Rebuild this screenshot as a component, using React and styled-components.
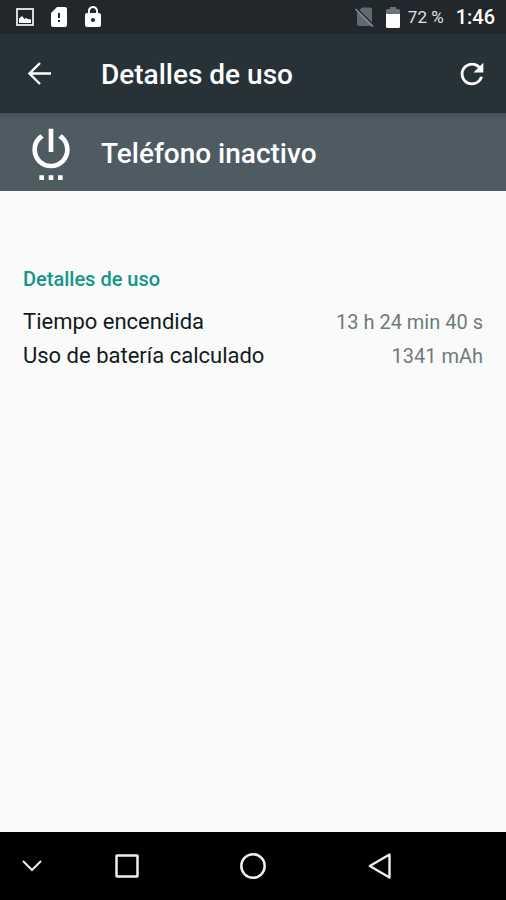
import React from 'react'
import styled, { createGlobalStyle } from 'styled-components'
import { MdLock, MdRefresh, MdSettingsPower } from 'react-icons/md'

const details = [
  { label: 'Tiempo encendida', value: '13 h 24 min 40 s' },
  { label: 'Uso de batería calculado', value: '1341 mAh' },
]

function App() {
  return (
    <>
      <GlobalStyle />
      <Screen>
        <StatusBar>
          <StatusIcons>
            <svg width="24" height="24" viewBox="0 0 24 24">
              <rect x="4" y="4" width="16" height="16" fill="none" stroke="#eceff1" strokeWidth="1.8" />
              <path d="M6 18v-4.500l3-2.500 2.500 3 1.500-1 2 1 3 .5V18z" fill="#fff" />
            </svg>
            <svg width="24" height="24" viewBox="0 0 24 24">
              <path fillRule="evenodd" fill="#fff" d="M18 2h-8L4 8v12a2 2 0 0 0 2 2h12a2 2 0 0 0 2-2V4a2 2 0 0 0-2-2zm-5 15h-2v-2h2v2zm0-4h-2V8h2v5z" />
            </svg>
            <MdLock size={24} />
          </StatusIcons>
          <SimIcon width="24" height="24" viewBox="0 0 24 24">
            <path fill="#606b70" d="M20 4.500a2 2 0 0 0-2-2h-8L5 7.500V19a2 2 0 0 0 2 2h11a2 2 0 0 0 2-2z" />
            <path d="M4.500 3L22 20.500" stroke="#21272b" strokeWidth="1.500" />
            <path d="M3.500 4L21 21.500" stroke="#829095" strokeWidth="1.600" />
          </SimIcon>
          <BatteryIcon width="14" height="21" viewBox="0 0 14 21">
            <path fill="#69757a" d="M0 7V3.500Q0 2 1.500 2H4V0h6v2h2.500Q14 2 14 3.500V7z" />
            <path fill="#fff" d="M0 7h14v12.500q0 1.500-1.500 1.500h-11Q0 21 0 19.500z" />
          </BatteryIcon>
          <Percent>72 %</Percent>
          <Clock>1:46</Clock>
        </StatusBar>
        <AppBar>
          <BarButton aria-label="Atrás">
            <svg width="24" height="24" viewBox="0 0 24 24">
              <path d="M23 11.500H2M12 1L1.500 11.500 12 22" fill="none" stroke="currentColor" strokeWidth="2.400" />
            </svg>
          </BarButton>
          <Title>Detalles de uso</Title>
          <BarButton aria-label="Actualizar">
            <MdRefresh size={34} />
          </BarButton>
        </AppBar>
        <Header>
          <HeaderIcon>
            <MdSettingsPower size={56} />
          </HeaderIcon>
          <HeaderName>Teléfono inactivo</HeaderName>
        </Header>
        <Content>
          <SectionTitle>Detalles de uso</SectionTitle>
          <DetailList>
            {details.map(item => (
              <DetailRow key={item.label}>
                <DetailLabel>{item.label}</DetailLabel>
                <DetailValue>{item.value}</DetailValue>
              </DetailRow>
            ))}
          </DetailList>
        </Content>
        <NavBar>
          <NavButton aria-label="Ocultar">
            <svg width="20" height="12" viewBox="0 0 20 12">
              <path d="M1 1l9 9 9-9" fill="none" stroke="currentColor" strokeWidth="2" />
            </svg>
          </NavButton>
          <NavButton aria-label="Recientes">
            <svg width="24" height="24" viewBox="0 0 24 24">
              <rect x="1.500" y="1.500" width="21" height="21" rx="0.500" fill="none" stroke="currentColor" strokeWidth="2.500" />
            </svg>
          </NavButton>
          <NavButton aria-label="Inicio">
            <svg width="28" height="28" viewBox="0 0 28 28">
              <circle cx="14" cy="14" r="11.700" fill="none" stroke="currentColor" strokeWidth="2.500" />
            </svg>
          </NavButton>
          <NavButton aria-label="Volver">
            <svg width="24" height="28" viewBox="0 0 24 28">
              <path d="M21.500 2.500v23L1.800 14z" fill="none" stroke="currentColor" strokeWidth="2.400" strokeLinejoin="round" />
            </svg>
          </NavButton>
        </NavBar>
      </Screen>
    </>
  )
}

export default App


const GlobalStyle = createGlobalStyle`
* {
  box-sizing: border-box;
}
body {
  margin: 0;
  font-family: Roboto, sans-serif;
}
svg {
  display: block;
  flex-shrink: 0;
}
`;

const Screen = styled.div`
display: flex;
flex-direction: column;
min-height: 100vh;
background-color: #fafafa;
`;

const StatusBar = styled.div`
display: flex;
align-items: center;
height: 34px;
padding: 0 11px 0 13px;
color: white;
background-color: #21272b;
`;
const StatusIcons = styled.div`
display: flex;
flex: 1;
gap: 10px;
`;
const SimIcon = styled.svg`
margin-right: 10px;
`;
const BatteryIcon = styled.svg`
margin-right: 8px;
`;
const Percent = styled.span`
margin-right: 12px;
font-size: 17px;
color: #dfe2e3;
`;
const Clock = styled.span`
font-size: 20px;
font-weight: 500;
`;

const AppBar = styled.header`
display: flex;
align-items: center;
height: 79px;
color: white;
background-color: #263238;
`;
const BarButton = styled.button`
display: flex;
align-items: center;
justify-content: center;
width: 68px;
height: 68px;
padding: 0;
border: none;
color: inherit;
background: none;
cursor: pointer;

&:first-child {
  width: 79px;
}
`;
const Title = styled.h1`
flex: 1;
margin: 0;
padding: 2px 0 0 22px;
font-size: 28px;
line-height: 33px;
font-weight: 500;
`;

const Header = styled.div`
display: flex;
align-items: center;
height: 78px;
color: white;
background: linear-gradient(#434f55, #4f5b62 6px);
`;
const HeaderIcon = styled.div`
display: flex;
justify-content: center;
width: 101px;
`;
const HeaderName = styled.h2`
margin: 0;
padding-top: 2px;
font-size: 28px;
line-height: 33px;
font-weight: 500;
`;

const Content = styled.main`
flex: 1;
padding: 76px 23px 0;
`;
const SectionTitle = styled.h3`
margin: 0 0 14px;
font-size: 20px;
line-height: 24px;
font-weight: 500;
color: #159588;
`;
const DetailList = styled.dl`
margin: 0;
`;
const DetailRow = styled.div`
display: flex;
align-items: baseline;
justify-content: space-between;
line-height: 33px;
`;
const DetailLabel = styled.dt`
font-size: 22px;
color: #101c21;
`;
const DetailValue = styled.dd`
margin: 0;
font-size: 20px;
color: #6f7a7c;
`;

const NavBar = styled.nav`
display: grid;
grid-template-columns: 1fr 2fr 2fr 2fr 1fr;
height: 68px;
background-color: black;
`;
const NavButton = styled.button`
display: flex;
align-items: center;
justify-content: center;
padding: 0;
border: none;
color: #eceff1;
background: none;
cursor: pointer;
`;
